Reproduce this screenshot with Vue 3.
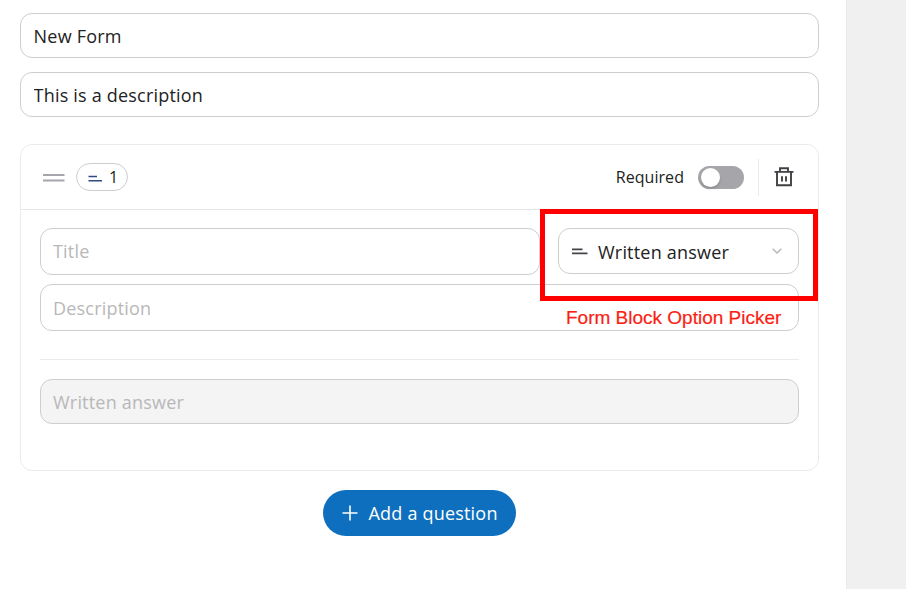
<template>
  <div class="page">
    <main class="form-editor">
      <input v-model="form.name" class="field" type="text" aria-label="Form name" />
      <input v-model="form.description" class="field" type="text" aria-label="Form description" />

      <section class="block">
        <header class="block-header">
          <svg class="drag-icon" viewBox="0 0 22 8" stroke="currentColor" stroke-width="2">
            <path d="M0 1h21.5M0 6.5h21.5" />
          </svg>
          <span class="block-number">
            <svg class="number-icon" viewBox="0 0 14 7" stroke="currentColor" stroke-width="1.6">
              <path d="M.5 1.5h8.5M.5 5.7h13.5" />
            </svg>
            <span>1</span>
          </span>
          <span class="required-label">Required</span>
          <button
            class="toggle"
            :class="{ on: block.required }"
            type="button"
            aria-label="Required"
            @click="block.required = !block.required"
          >
            <span class="knob"></span>
          </button>
          <button class="delete" type="button" aria-label="Delete block">
            <svg viewBox="0 0 20 20" fill="none" stroke="currentColor" stroke-width="1.9">
              <path d="M.5 4.9h19M6 4.5V1.2h8v3.3M3 5v13.3h14V5M8 9.2v5.4M12 9.2v5.4" />
            </svg>
          </button>
        </header>

        <div class="block-body">
          <div class="title-row">
            <input v-model="block.title" class="field title" type="text" placeholder="Title" />
            <div class="picker">
              <button class="select" type="button">
                <svg class="select-icon" viewBox="0 0 16 7" stroke="currentColor" stroke-width="1.6">
                  <path d="M0 1.4h10.5M0 5.4h15.5" />
                </svg>
                <span class="select-label">Written answer</span>
                <svg class="chevron" viewBox="0 0 10 6" fill="none" stroke="currentColor" stroke-width="1.5">
                  <path d="M.7.7L5 5 9.3.7" />
                </svg>
              </button>
              <div class="highlight"></div>
              <span class="highlight-label">Form Block Option Picker</span>
            </div>
          </div>
          <input v-model="block.description" class="field description" type="text" placeholder="Description" />
          <hr class="divider" />
          <input class="field answer" type="text" placeholder="Written answer" disabled />
        </div>
      </section>

      <button class="add-question" type="button">
        <svg class="plus-icon" viewBox="0 0 16 16" stroke="currentColor" stroke-width="1.6">
          <path d="M8 .5v15M.5 8h15" />
        </svg>
        <span>Add a question</span>
      </button>
    </main>
    <aside class="side"></aside>
  </div>
</template>

<script setup>
import { reactive } from 'vue';

const form = reactive({
  name: 'New Form',
  description: 'This is a description'
});

const block = reactive({
  title: '',
  description: '',
  required: false
});
</script>

<style>
body {
  margin: 0;
  overflow: hidden;
}
</style>

<style scoped>
.page {
  display: flex;
  height: 589px;
  background: #ffffff;
  color: #222222;
  font-family: 'Open Sans', 'Noto Sans', sans-serif;
  font-size: 18px;
  letter-spacing: 0.2px;
}

.page *,
.page {
  box-sizing: border-box;
}

button,
input {
  font: inherit;
  letter-spacing: inherit;
  color: inherit;
  margin: 0;
}

button {
  padding: 0;
  border: 0;
  background: none;
  cursor: pointer;
}

svg {
  display: block;
  flex-shrink: 0;
}

.form-editor {
  width: 846px;
  padding: 13px 27px 0 20px;
  display: flex;
  flex-direction: column;
}

.side {
  flex: 1;
  background: #f0f0f0;
  border-left: 1px solid #eaeaea;
}

.field {
  display: block;
  width: 100%;
  height: 45px;
  padding: 0 12px;
  border: 1px solid #cecece;
  border-radius: 12px;
  background: #ffffff;
  outline: none;
}

.field::placeholder {
  color: #b8b8b8;
  opacity: 1;
}

.form-editor > .field {
  padding: 0 12.6px;
}

.form-editor > .field + .field {
  margin-top: 14px;
}

.block {
  height: 327px;
  margin-top: 27px;
  border: 1px solid #ebebeb;
  border-radius: 12px;
}

.block-header {
  display: flex;
  align-items: center;
  height: 65px;
  padding: 0 24px 0 22px;
  border-bottom: 1px solid #e6e6e6;
}

.drag-icon {
  width: 22px;
  height: 8px;
  margin-top: 2px;
  color: #a5a5ab;
}

.block-number {
  display: flex;
  align-items: center;
  gap: 7px;
  width: 52px;
  height: 28px;
  margin-left: 11px;
  padding-left: 11px;
  border: 1px solid #cecece;
  border-radius: 14px;
  font-size: 16px;
}

.number-icon {
  width: 14px;
  height: 7px;
  margin-top: 2px;
  color: #2f4a83;
}

.required-label {
  margin-left: auto;
  font-size: 16px;
  letter-spacing: 0.05px;
}

.toggle {
  width: 46px;
  height: 23px;
  margin-left: 14px;
  padding: 2px 3px;
  border-radius: 12px;
  background: #a5a5aa;
}

.toggle.on {
  background: #0e6fbe;
}

.knob {
  display: block;
  width: 19px;
  height: 19px;
  border-radius: 50%;
  background: #ffffff;
  box-shadow: 0 2px 3px rgba(0, 0, 0, 0.15);
}

.toggle.on .knob {
  margin-left: auto;
}

.delete {
  display: flex;
  align-items: center;
  height: 37px;
  margin-left: 14px;
  padding-left: 15px;
  border-left: 1px solid #ebebeb;
  color: #404045;
}

.delete svg {
  width: 20px;
  height: 20px;
}

.block-body {
  padding: 18px 19px 0;
}

.title-row {
  display: flex;
  align-items: flex-start;
}

.title {
  width: 500px;
  height: 47px;
  padding-bottom: 1px;
}

.picker {
  position: relative;
  width: 241px;
  margin-left: 18px;
}

.select {
  display: flex;
  align-items: center;
  width: 100%;
  height: 46px;
  padding: 0 16px 0 13px;
  border: 1px solid #cecece;
  border-radius: 12px;
}

.select-icon {
  width: 16px;
  height: 7px;
  color: #444448;
}

.select-label {
  margin: 2px auto 0 10px;
}

.chevron {
  width: 10px;
  height: 6px;
  color: #b8b8b8;
}

/* annotation drawn over the picker and the description field */
.highlight {
  position: absolute;
  top: -19px;
  left: -18px;
  width: 278px;
  height: 92px;
  border: 5px solid #ff0000;
  pointer-events: none;
}

.highlight-label {
  position: absolute;
  top: 79px;
  left: 8px;
  color: #fa1e14;
  font-family: 'Liberation Sans', Arial, sans-serif;
  font-size: 19px;
  letter-spacing: 0;
  line-height: 22px;
  white-space: nowrap;
  -webkit-text-stroke: 0.2px #fa1e14;
}

.description {
  height: 47px;
  margin-top: 9px;
}

.divider {
  height: 1px;
  margin: 28px 0 19px;
  border: 0;
  background: #ebebeb;
}

.answer {
  background: #f4f4f4;
}

.add-question {
  display: flex;
  align-items: center;
  align-self: center;
  gap: 10.5px;
  width: 193px;
  height: 46px;
  margin-top: 19px;
  padding-left: 19px;
  border-radius: 23px;
  background: #0e6fbe;
  color: #ffffff;
}

.plus-icon {
  width: 16px;
  height: 16px;
}
</style>
